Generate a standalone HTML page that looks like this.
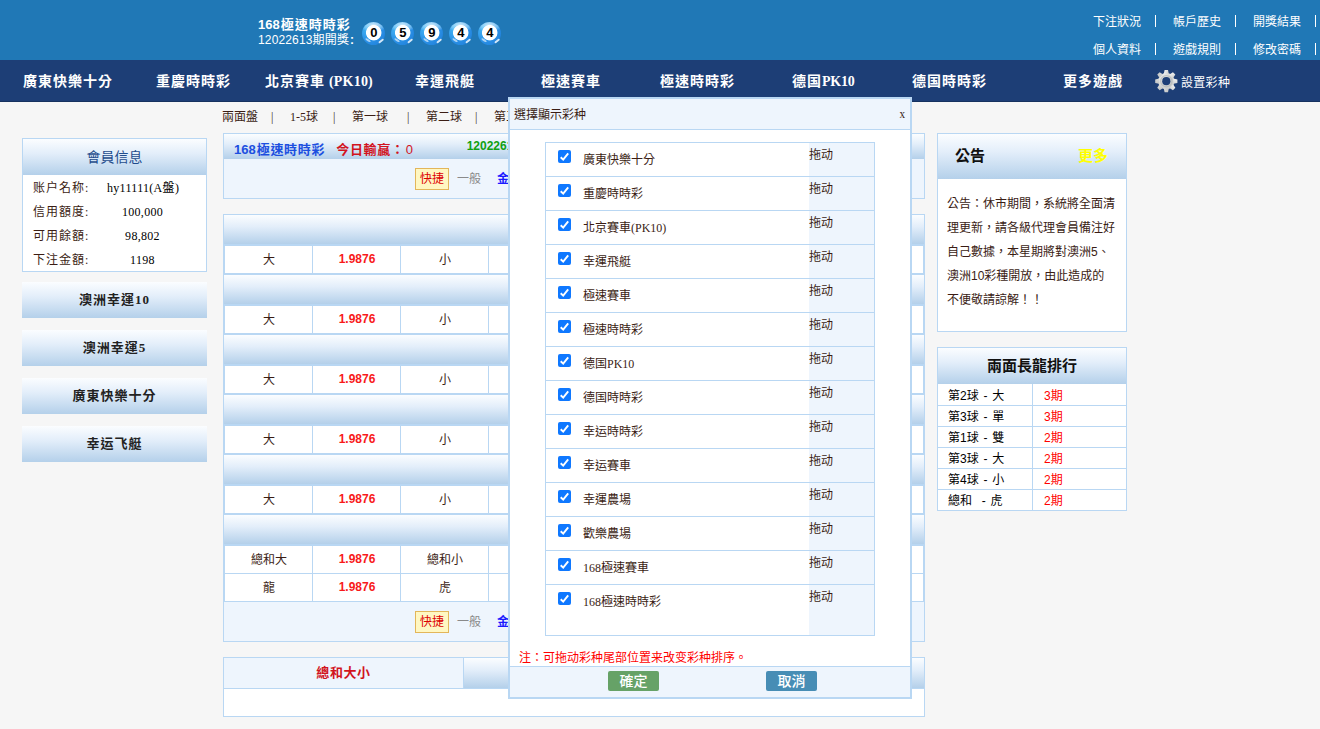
<!DOCTYPE html>
<html lang="zh-Hant">
<head>
<meta charset="utf-8">
<title>168極速時時彩</title>
<style>
*{box-sizing:border-box;margin:0;padding:0}
html,body{width:1320px;height:729px;overflow:hidden}
body{background:#f6f6f6;font-family:"Liberation Serif","Noto Sans CJK TC","Noto Sans CJK SC",sans-serif;font-size:12px;color:#000;position:relative}
a{color:inherit;text-decoration:none}
ul{list-style:none}
.abs{position:absolute}
.sans{font-family:"Liberation Sans","Noto Sans CJK TC","Noto Sans CJK SC",sans-serif}
.serifb{font-family:"Liberation Serif","Noto Serif CJK SC","Noto Sans CJK TC",serif;font-weight:bold}
/* header */
#top{position:absolute;left:0;top:0;width:1320px;height:60px;background:#2078b6}
#top .title{position:absolute;left:258px;top:17px;color:#fff;line-height:15px;font-size:13px}
#top .title b{display:block}
.ball{position:absolute;top:22px;width:23px;height:23px;border-radius:50%;text-align:center;font:bold 13px/21.5px "Liberation Sans",sans-serif;color:#000;padding-left:.5px;
background:
 radial-gradient(circle at 51% 46.5%,#fff 0,#fff 7.3px,rgba(255,255,255,0) 8.1px),
 radial-gradient(ellipse 62% 30% at 50% 13%,rgba(255,255,255,.75) 0,rgba(190,235,255,.5) 60%,rgba(120,210,250,0) 100%),
 radial-gradient(circle at 30% 30%,#45b8f5 0,#2c93e8 50%,#1c78d4 100%)}
.ball:before{content:"";position:absolute;left:16px;top:17.5px;width:6px;height:1.6px;border-radius:1px;background:rgba(255,255,255,.8);transform:rotate(-38deg)}
.ball:after{content:"";position:absolute;left:2.5px;top:17.2px;width:5.5px;height:2.4px;border-radius:50%;background:rgba(255,255,255,.6);transform:rotate(32deg)}
#top .links{position:absolute;right:0;top:0;color:#fff;font-size:12px}
#top .links div{position:absolute;white-space:nowrap}
/* nav */
#nav{position:absolute;left:0;top:60px;width:1320px;height:42px;background:#1d3e76;border-bottom:1px solid #16325f}
#nav a{position:absolute;top:0;line-height:43px;color:#fff;font-size:14px;letter-spacing:1px;white-space:nowrap}
#nav a span{letter-spacing:.5px;font-family:"Liberation Serif",serif;font-size:14px}
/* subnav */
#sub{position:absolute;left:222px;top:104px;height:27px;line-height:27px;font-size:12px;white-space:pre;color:#3b1d14}
/* gradient */
.grad{background:linear-gradient(#fbfdff 0,#e3eefa 40%,#b4d0ea 100%)}
.box{border:1px solid #b9d7f3;background:#fff}
.lat{font-family:"Liberation Serif",serif}

/* sidebar */
#side{position:absolute;left:22px;top:138px;width:185px}
#side .info{border:1px solid #b9d7f3;background:#fff;height:134px}
#side .info h3{height:36px;line-height:38px;text-align:center;font-size:14px;font-weight:normal;color:#1f4c8c}
#side .info dl{height:24px;line-height:24px;white-space:nowrap}
#side .info dt{position:relative;top:1px;float:left;width:84px;padding-left:10px;letter-spacing:1px;color:#3b1d14}
#side .info dd{position:relative;top:1px;float:left;width:71px;text-align:center;font-size:12px;letter-spacing:.3px}
#side .btn{display:block;height:36px;line-height:35px;margin-top:12px;text-align:center;font-size:13px;font-weight:bold;color:#222;letter-spacing:1px}
#side .info + .btn{margin-top:10px}
/* main */
#main{position:absolute;left:223px;top:133px;width:702px}
#main .hd{border:1px solid #b9d7f3;background:#eef5fd;height:66px}
#main .hd .r1{height:25px;line-height:31px;padding-left:10px;font-size:13px;font-weight:bold;white-space:nowrap;overflow:hidden}
#main .hd .r2,#main .ft{height:39px;line-height:38px;white-space:nowrap}
.kj{display:inline-block;height:22px;line-height:20px;padding:0 4px;border:1px solid #e3b65a;background:#fff7c2;color:#d00;font-size:12px;vertical-align:middle;letter-spacing:0}
.yb{color:#8a8a8a;font-size:12px;margin-left:8px;vertical-align:middle}
.je{color:#1a1aff;font-weight:bold;font-size:12px;margin-left:16px;vertical-align:middle}
table{border-collapse:collapse}
#bet{position:absolute;left:0;top:81px;width:702px;border-collapse:separate;border-spacing:0;border-left:1px solid #b9d7f3;border-right:1px solid #b9d7f3;background:#fff;table-layout:fixed}
#bet th{height:31px;border-top:1px solid #b9d7f3;border-bottom:1px solid #b9d7f3;font-size:14px}
#bet td{height:29px;border:1px solid #b9d7f3;border-left:0;text-align:center;font-size:12px;color:#3b1d14;padding:0 0 1px 1px}
#bet td:first-child{border-left:1px solid #b9d7f3}
#bet tr.r2 td{border-top:0;height:28px}
#bet td.o{font:bold 12px "Liberation Sans",sans-serif;color:#f81a1a}
#main .ft{position:absolute;left:0;top:469px;width:702px;border:1px solid #b9d7f3;border-top:0;background:#eef5fd;height:40px}
#tabs{position:absolute;left:0;top:524px;width:702px;height:60px;border:1px solid #b9d7f3;background:#fff}
#tabs ul{height:31px;border-bottom:1px solid #b9d7f3;display:flex}
#tabs li{flex:1;letter-spacing:.6px;border-right:1px solid #b9d7f3;text-align:center;line-height:30px;font-size:13px}
#tabs li.on{background:#eef5fd;color:#d2141e}
/* right */
#right{position:absolute;left:937px;top:133px;width:190px}
#right .box h3{height:45px;line-height:44px;font-size:15px;padding:0 18px 0 17px;color:#111}
#right .box h3 a{float:right;color:#ff0;font-size:15px}
#right .note{white-space:nowrap;padding:13px 9px 0 9px;height:152px;line-height:24px;font-size:12px;color:#3a1c14}
#right .long{margin-top:15px}
#right .long h3{height:36px;line-height:36px;text-align:center;padding:0;font-size:15px}
#right .long table{width:100%;border-collapse:separate;border-spacing:0}
#right .long tr:first-child td{height:22px;line-height:18px;padding-top:3px}
#right .long td{word-spacing:1.5px;height:21px;line-height:18px;padding-top:2px;border-bottom:1px solid #b9d7f3;padding-left:10px;font-size:12px;white-space:pre}
#right .long tr:last-child td{border-bottom:0;height:20px}
#right .long td+td{border-left:1px solid #b9d7f3;color:#f00;width:94px;padding-left:11px}
/* modal */
#modal{position:absolute;left:508px;top:97px;width:404px;height:602px;background:#fff;border:2px solid #b9d7f3;color:#3b1d14}
#modal .mt{height:31px;line-height:32px;background:#eef5fd;border-bottom:1px solid #b9d7f3;padding:0 5px 0 4px;font-size:12px}
#modal .mt i{float:right;font-style:normal;font-size:13px;line-height:29px;transform:scaleX(.85)}
#modal .list{position:absolute;left:35px;top:43px;width:330px;height:494px;border:1px solid #b9d7f3;background:linear-gradient(to right,#fff 0,#fff 263px,#eef5fd 263px)}
#modal .list li{height:34px;border-bottom:1px solid #b9d7f3;position:relative;font-size:12px}
#modal .list li:last-child{border-bottom:0}
#modal .list li .cb{position:absolute;left:12px;top:7px}
#modal .list li span{position:absolute;left:37px;top:8px;line-height:19px}
#modal .list li em{position:absolute;left:263px;top:4px;font-style:normal;line-height:16px}
#modal .tip{position:absolute;left:9px;top:551px;color:#f00;font-size:12px;line-height:16px}
#modal .mf{position:absolute;left:0;bottom:0;width:100%;height:31px;background:#eef5fd;border-top:1px solid #b9d7f3}
#modal .mf a{position:absolute;top:4px;width:51px;height:20px;line-height:21px;border-radius:2px;color:#fff;text-align:center;font-size:14px;font-weight:500}
#modal .mf a.ok{left:98px;background:#66a267}
#modal .mf a.no{left:256px;background:#478db5}
</style>
</head>
<body>
<div id="top">
  <div class="title sans"><b>168<span style="letter-spacing:1px;margin-left:1px">極速時時彩</span></b><span style="display:block;font-size:12px;line-height:16px;letter-spacing:.15px">12022613期開獎<span style="margin-left:1px;font-weight:bold">:</span></span></div>
  <span class="ball" style="left:362px">0</span>
  <span class="ball" style="left:391px">5</span>
  <span class="ball" style="left:420px">9</span>
  <span class="ball" style="left:449px">4</span>
  <span class="ball" style="left:478px">4</span>
<div class="tl" style="color:#fff;font-size:12px"><a class="abs" style="left:1093px;top:14px;line-height:16px">下注狀況</a><i class="abs" style="left:1155px;top:15px;width:1px;height:12px;background:#fff"></i><a class="abs" style="left:1173px;top:14px;line-height:16px">帳戶歷史</a><i class="abs" style="left:1235px;top:15px;width:1px;height:12px;background:#fff"></i><a class="abs" style="left:1253px;top:14px;line-height:16px">開獎結果</a><i class="abs" style="left:1315px;top:15px;width:1px;height:12px;background:#fff"></i><a class="abs" style="left:1093px;top:42px;line-height:16px">個人資料</a><i class="abs" style="left:1155px;top:43px;width:1px;height:12px;background:#fff"></i><a class="abs" style="left:1173px;top:42px;line-height:16px">遊戲規則</a><i class="abs" style="left:1235px;top:43px;width:1px;height:12px;background:#fff"></i><a class="abs" style="left:1253px;top:42px;line-height:16px">修改密碼</a><i class="abs" style="left:1315px;top:43px;width:1px;height:12px;background:#fff"></i></div>
</div>
<div id="nav" class="sans" style="font-weight:bold">
  <a style="left:23px">廣東快樂十分</a>
  <a style="left:156px">重慶時時彩</a>
  <a style="left:265px">北京賽車<span style="margin-left:4px;letter-spacing:.2px">(PK10)</span></a>
  <a style="left:415px">幸運飛艇</a>
  <a style="left:541px">極速賽車</a>
  <a style="left:660px">極速時時彩</a>
  <a style="left:792px">德国<span style="letter-spacing:-.2px">PK10</span></a>
  <a style="left:912px">德国時時彩</a>
  <a style="left:1063px">更多遊戲</a>
  <svg class="abs" style="left:1154px;top:9px" width="24" height="24" viewBox="-12 -12 24 24">
    <defs><linearGradient id="gg" x1="0" y1="0" x2="1" y2="1"><stop offset="0" stop-color="#f4f4f4"/><stop offset=".5" stop-color="#d4d6d6"/><stop offset="1" stop-color="#c2c4c4"/></linearGradient></defs>
    <g fill="url(#gg)" transform="translate(.3 .2)">
      <circle r="8.2"/>
      <g id="t"><path d="M-2.6 -7 L-1.7 -11.1 L1.7 -11.1 L2.6 -7 Z M-2.6 7 L-1.7 11.1 L1.7 11.1 L2.6 7 Z"/></g>
      <use href="#t" transform="rotate(45)"/>
      <use href="#t" transform="rotate(90)"/>
      <use href="#t" transform="rotate(135)"/>
    </g>
    <circle cx=".3" cy=".2" r="5.6" fill="none" stroke="#b4b8b8" stroke-width="1.2" opacity=".75"/>
    <circle cx=".3" cy=".2" r="4.1" fill="#1d3e76"/>
  </svg>
  <a class="sans" style="left:1181px;top:2px;letter-spacing:.3px;font-size:12px;font-weight:normal;font-family:'Liberation Sans','Noto Sans CJK TC',sans-serif">設置彩种</a>
</div>
<div id="sub"><span class="abs" style="left:0px;top:0">兩面盤</span><span class="abs" style="left:49px;top:0">|</span><span class="abs" style="left:68px;top:0">1-5球</span><span class="abs" style="left:111px;top:0">|</span><span class="abs" style="left:130px;top:0">第一球</span><span class="abs" style="left:185px;top:0">|</span><span class="abs" style="left:204px;top:0">第二球</span><span class="abs" style="left:253px;top:0">|</span><span class="abs" style="left:272px;top:0">第三球</span><span class="abs" style="left:321px;top:0">|</span><span class="abs" style="left:340px;top:0">第四球</span><span class="abs" style="left:389px;top:0">|</span><span class="abs" style="left:408px;top:0">第五球</span></div>

<div id="side">
  <div class="info">
    <h3 class="grad">會員信息</h3>
    <dl><dt>账户名称:</dt><dd>hy11111(A盤)</dd></dl>
    <dl><dt>信用額度:</dt><dd>100,000</dd></dl>
    <dl><dt>可用餘額:</dt><dd>98,802</dd></dl>
    <dl><dt>下注金額:</dt><dd>1198</dd></dl>
  </div>
  <a class="btn grad sans">澳洲幸運<span class="lat">10</span></a>
  <a class="btn grad sans">澳洲幸運<span class="lat">5</span></a>
  <a class="btn grad sans">廣東快樂十分</a>
  <a class="btn grad sans">幸运飞艇</a>
</div>

<div id="main">
  <div class="hd">
    <div class="r1 grad sans"><span style="color:#1c4fe0">168<span style="letter-spacing:.7px;margin-left:1px">極速時時彩</span></span><span style="color:#d2141e;margin-left:11px;letter-spacing:.7px">今日輸贏：<span style="margin-left:1px;font-weight:normal">0</span></span><span style="color:#10a010;margin-left:53px;position:relative;top:-4px;font-size:12px">12022614期</span></div>
    <div class="r2"><span style="display:inline-block;width:191px"></span><span class="kj">快捷</span><span class="yb">一般</span><span class="je">金額</span></div>
  </div>
  <table id="bet"><colgroup><col style="width:89px"><col style="width:88px"><col style="width:88px"><col style="width:88px"><col style="width:88px"><col style="width:88px"><col style="width:88px"><col></colgroup><tr class="g"><th colspan="8" class="grad">第一球</th></tr><tr><td>大</td><td class="o">1.9876</td><td>小</td><td class="o">1.9876</td><td>單</td><td class="o">1.9876</td><td>雙</td><td class="o">1.9876</td></tr><tr class="g"><th colspan="8" class="grad">第二球</th></tr><tr><td>大</td><td class="o">1.9876</td><td>小</td><td class="o">1.9876</td><td>單</td><td class="o">1.9876</td><td>雙</td><td class="o">1.9876</td></tr><tr class="g"><th colspan="8" class="grad">第三球</th></tr><tr><td>大</td><td class="o">1.9876</td><td>小</td><td class="o">1.9876</td><td>單</td><td class="o">1.9876</td><td>雙</td><td class="o">1.9876</td></tr><tr class="g"><th colspan="8" class="grad">第四球</th></tr><tr><td>大</td><td class="o">1.9876</td><td>小</td><td class="o">1.9876</td><td>單</td><td class="o">1.9876</td><td>雙</td><td class="o">1.9876</td></tr><tr class="g"><th colspan="8" class="grad">第五球</th></tr><tr><td>大</td><td class="o">1.9876</td><td>小</td><td class="o">1.9876</td><td>單</td><td class="o">1.9876</td><td>雙</td><td class="o">1.9876</td></tr><tr class="g"><th colspan="8" class="grad">總和、龍虎和</th></tr><tr><td>總和大</td><td class="o">1.9876</td><td>總和小</td><td class="o">1.9876</td><td>總和單</td><td class="o">1.9876</td><td>總和雙</td><td class="o">1.9876</td></tr><tr class="r2"><td>龍</td><td class="o">1.9876</td><td>虎</td><td class="o">1.9876</td><td>和</td><td class="o">9.28</td><td></td><td class="o"></td></tr></table>
  <div class="ft"><span style="display:inline-block;width:191px"></span><span class="kj">快捷</span><span class="yb">一般</span><span class="je">金額</span></div>
  <div id="tabs"><ul class="sans" style="font-weight:bold"><li class="on" style="flex:0 0 240px">總和大小</li><li class="grad">總和單雙</li><li class="grad" style="border-right:0">龍虎和</li></ul></div>
</div>

<div id="right">
  <div class="box">
    <h3 class="grad sans">公告<a>更多</a></h3>
    <div class="note sans">公告：休市期間，系統將全面清<br>理更新，請各級代理會員備注好<br>自己數據，本星期將對澳洲5、<br>澳洲10彩種開放，由此造成的<br>不便敬請諒解！！</div>
  </div>
  <div class="box long">
    <h3 class="grad sans">兩面長龍排行</h3>
    <table class="sans">
      <tr><td>第2球 - 大</td><td>3期</td></tr>
      <tr><td>第3球 - 單</td><td>3期</td></tr>
      <tr><td>第1球 - 雙</td><td>2期</td></tr>
      <tr><td>第3球 - 大</td><td>2期</td></tr>
      <tr><td>第4球 - 小</td><td>2期</td></tr>
      <tr><td>總和  - 虎</td><td>2期</td></tr>
    </table>
  </div>
</div>

<div id="modal">
  <div class="mt"><i>x</i>選擇顯示彩种</div>
  <ul class="list"><li><svg class="cb" width="13" height="13" viewBox="0 0 13 13"><rect width="13" height="13" rx="2" fill="#0f78ff"/><path d="M2.7 7.3L5.2 9.7L10.2 3.3" stroke="#fff" stroke-width="1.9" fill="none"/></svg><span>廣東快樂十分</span><em>拖动</em></li><li><svg class="cb" width="13" height="13" viewBox="0 0 13 13"><rect width="13" height="13" rx="2" fill="#0f78ff"/><path d="M2.7 7.3L5.2 9.7L10.2 3.3" stroke="#fff" stroke-width="1.9" fill="none"/></svg><span>重慶時時彩</span><em>拖动</em></li><li><svg class="cb" width="13" height="13" viewBox="0 0 13 13"><rect width="13" height="13" rx="2" fill="#0f78ff"/><path d="M2.7 7.3L5.2 9.7L10.2 3.3" stroke="#fff" stroke-width="1.9" fill="none"/></svg><span>北京賽車(PK10)</span><em>拖动</em></li><li><svg class="cb" width="13" height="13" viewBox="0 0 13 13"><rect width="13" height="13" rx="2" fill="#0f78ff"/><path d="M2.7 7.3L5.2 9.7L10.2 3.3" stroke="#fff" stroke-width="1.9" fill="none"/></svg><span>幸運飛艇</span><em>拖动</em></li><li><svg class="cb" width="13" height="13" viewBox="0 0 13 13"><rect width="13" height="13" rx="2" fill="#0f78ff"/><path d="M2.7 7.3L5.2 9.7L10.2 3.3" stroke="#fff" stroke-width="1.9" fill="none"/></svg><span>極速賽車</span><em>拖动</em></li><li><svg class="cb" width="13" height="13" viewBox="0 0 13 13"><rect width="13" height="13" rx="2" fill="#0f78ff"/><path d="M2.7 7.3L5.2 9.7L10.2 3.3" stroke="#fff" stroke-width="1.9" fill="none"/></svg><span>極速時時彩</span><em>拖动</em></li><li><svg class="cb" width="13" height="13" viewBox="0 0 13 13"><rect width="13" height="13" rx="2" fill="#0f78ff"/><path d="M2.7 7.3L5.2 9.7L10.2 3.3" stroke="#fff" stroke-width="1.9" fill="none"/></svg><span>德国PK10</span><em>拖动</em></li><li><svg class="cb" width="13" height="13" viewBox="0 0 13 13"><rect width="13" height="13" rx="2" fill="#0f78ff"/><path d="M2.7 7.3L5.2 9.7L10.2 3.3" stroke="#fff" stroke-width="1.9" fill="none"/></svg><span>德国時時彩</span><em>拖动</em></li><li><svg class="cb" width="13" height="13" viewBox="0 0 13 13"><rect width="13" height="13" rx="2" fill="#0f78ff"/><path d="M2.7 7.3L5.2 9.7L10.2 3.3" stroke="#fff" stroke-width="1.9" fill="none"/></svg><span>幸运時時彩</span><em>拖动</em></li><li><svg class="cb" width="13" height="13" viewBox="0 0 13 13"><rect width="13" height="13" rx="2" fill="#0f78ff"/><path d="M2.7 7.3L5.2 9.7L10.2 3.3" stroke="#fff" stroke-width="1.9" fill="none"/></svg><span>幸运賽車</span><em>拖动</em></li><li><svg class="cb" width="13" height="13" viewBox="0 0 13 13"><rect width="13" height="13" rx="2" fill="#0f78ff"/><path d="M2.7 7.3L5.2 9.7L10.2 3.3" stroke="#fff" stroke-width="1.9" fill="none"/></svg><span>幸運農場</span><em>拖动</em></li><li><svg class="cb" width="13" height="13" viewBox="0 0 13 13"><rect width="13" height="13" rx="2" fill="#0f78ff"/><path d="M2.7 7.3L5.2 9.7L10.2 3.3" stroke="#fff" stroke-width="1.9" fill="none"/></svg><span>歡樂農場</span><em>拖动</em></li><li><svg class="cb" width="13" height="13" viewBox="0 0 13 13"><rect width="13" height="13" rx="2" fill="#0f78ff"/><path d="M2.7 7.3L5.2 9.7L10.2 3.3" stroke="#fff" stroke-width="1.9" fill="none"/></svg><span>168極速賽車</span><em>拖动</em></li><li><svg class="cb" width="13" height="13" viewBox="0 0 13 13"><rect width="13" height="13" rx="2" fill="#0f78ff"/><path d="M2.7 7.3L5.2 9.7L10.2 3.3" stroke="#fff" stroke-width="1.9" fill="none"/></svg><span>168極速時時彩</span><em>拖动</em></li></ul>
  <div class="tip">注：可拖动彩种尾部位置来改变彩种排序。</div>
  <div class="mf"><a class="ok sans">確定</a><a class="no sans">取消</a></div>
</div>
</body>
</html>
